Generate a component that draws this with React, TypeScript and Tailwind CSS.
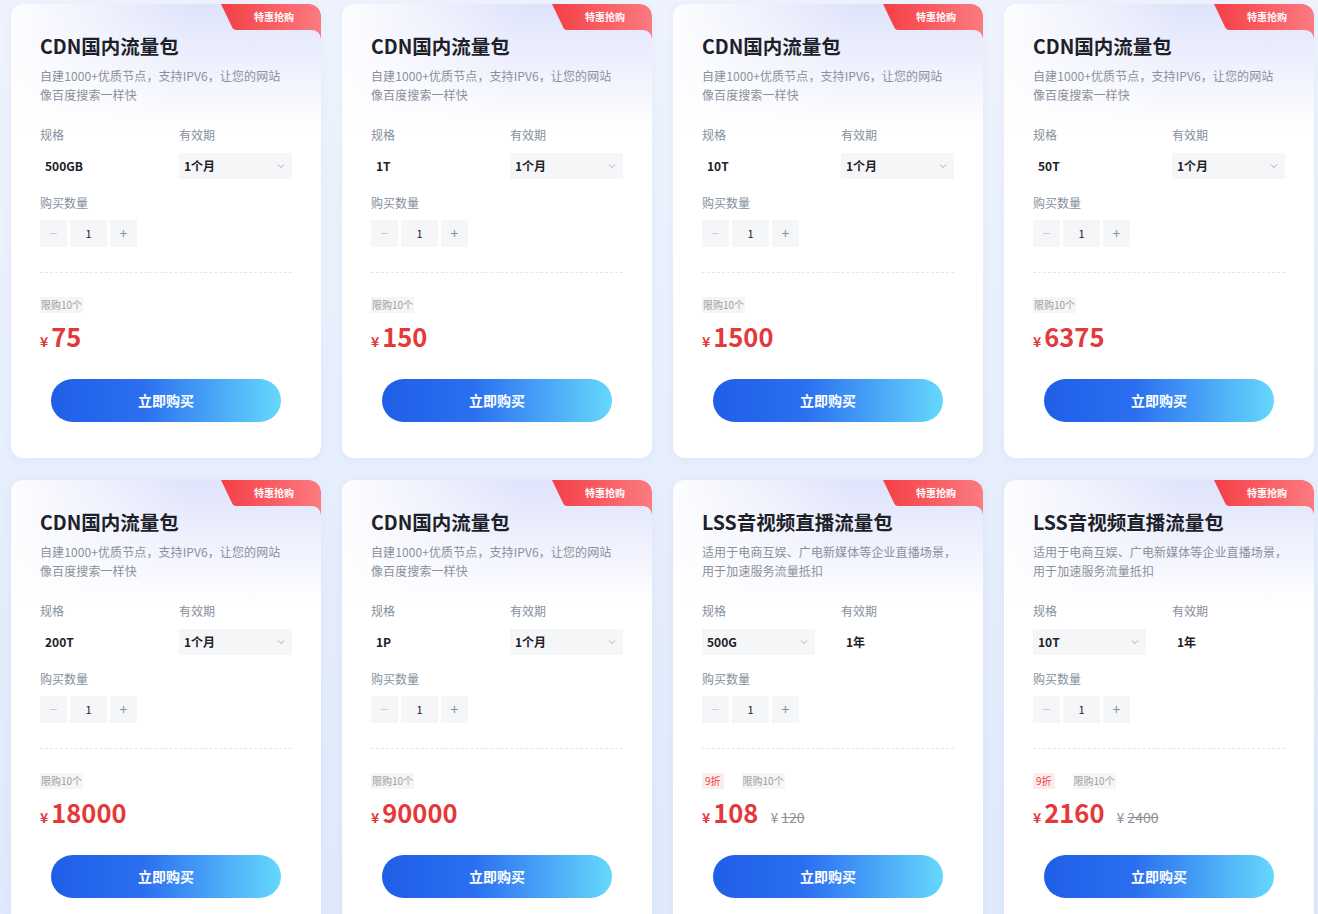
import React from 'react';

interface Pkg {
  title: string;
  desc: string[];
  spec: string;
  period: string;
  specSelect: boolean; // which field is a dropdown
  price: string;
  discount?: string;
  original?: string;
}

const CDN_DESC = ['自建1000+优质节点，支持IPV6，让您的网站', '像百度搜索一样快'];
const LSS_DESC = ['适用于电商互娱、广电新媒体等企业直播场景，', '用于加速服务流量抵扣'];

const PACKAGES: Pkg[] = [
  { title: 'CDN国内流量包', desc: CDN_DESC, spec: '500GB', period: '1个月', specSelect: false, price: '75' },
  { title: 'CDN国内流量包', desc: CDN_DESC, spec: '1T', period: '1个月', specSelect: false, price: '150' },
  { title: 'CDN国内流量包', desc: CDN_DESC, spec: '10T', period: '1个月', specSelect: false, price: '1500' },
  { title: 'CDN国内流量包', desc: CDN_DESC, spec: '50T', period: '1个月', specSelect: false, price: '6375' },
  { title: 'CDN国内流量包', desc: CDN_DESC, spec: '200T', period: '1个月', specSelect: false, price: '18000' },
  { title: 'CDN国内流量包', desc: CDN_DESC, spec: '1P', period: '1个月', specSelect: false, price: '90000' },
  { title: 'LSS音视频直播流量包', desc: LSS_DESC, spec: '500G', period: '1年', specSelect: true, price: '108', discount: '9折', original: '120' },
  { title: 'LSS音视频直播流量包', desc: LSS_DESC, spec: '10T', period: '1年', specSelect: true, price: '2160', discount: '9折', original: '2400' },
];

function Badge() {
  return (
    <div className="absolute top-0 right-0 w-[100px] h-[36px]">
      <svg width="100" height="36" viewBox="0 0 100 36" className="absolute inset-0">
        <defs>
          <linearGradient id="badgeGrad" x1="0" y1="0" x2="1" y2="0">
            <stop offset="0" stopColor="#f43f46" />
            <stop offset="1" stopColor="#fb7b80" />
          </linearGradient>
        </defs>
        <path d="M0 0 H88 A12 12 0 0 1 100 12 V35 Q99 26 90 26 H15 Q12.5 26 11.5 24 Z" fill="url(#badgeGrad)" />
      </svg>
      <span className="absolute left-[33px] top-[5px] text-[10px] leading-[16px] font-bold text-white">特惠抢购</span>
    </div>
  );
}

function Chevron() {
  return (
    <svg width="10" height="10" viewBox="0 0 10 10" fill="none">
      <path d="M2 3.5 L5 6.5 L8 3.5" stroke="#a9adb4" strokeWidth="1" />
    </svg>
  );
}

function Field({ value, select }: { value: string; select: boolean }) {
  if (select) {
    return (
      <div className="h-[26px] bg-[#f5f6f7] flex items-center justify-between pl-[5px] pr-[6px]">
        <span className="text-[12px] font-bold text-[#1d2129]">{value}</span>
        <Chevron />
      </div>
    );
  }
  return (
    <div className="h-[26px] flex items-center pl-[5px]">
      <span className="text-[12px] font-bold text-[#1d2129]">{value}</span>
    </div>
  );
}

function Card({ p }: { p: Pkg }) {
  return (
    <div className="relative h-[454px] rounded-[12px] overflow-hidden bg-white shadow-[0_2px_10px_rgba(40,80,180,0.05)]">
      <div className="absolute inset-x-0 top-0 h-[130px] bg-[linear-gradient(100deg,rgba(255,255,255,0.95)_0%,rgba(255,255,255,0)_55%),linear-gradient(180deg,#dfe3fb_0%,#ffffff_125px)]" />
      <Badge />
      <div className="relative px-[29px] pt-[28px] pb-[36px]">
        <div className="text-[19.5px] leading-[28px] font-bold text-[#1d2129]">{p.title}</div>
        <div className="mt-[6px] text-[12px] leading-[19px] text-[#8a919c] tracking-[0.1px]">
          {p.desc.map((l, i) => (
            <div key={i} className="whitespace-nowrap">{l}</div>
          ))}
        </div>

        <div className="mt-[22px] grid grid-cols-2 gap-x-[26px]">
          <div className="text-[12px] leading-[18px] text-[#86909c]">规格</div>
          <div className="text-[12px] leading-[18px] text-[#86909c]">有效期</div>
          <div className="mt-[9px]">
            <Field value={p.spec} select={p.specSelect} />
          </div>
          <div className="mt-[9px]">
            <Field value={p.period} select={!p.specSelect} />
          </div>
        </div>

        <div className="mt-[15px] text-[12px] leading-[18px] text-[#86909c]">购买数量</div>
        <div className="mt-[8px] flex items-center gap-[3px]">
          <div className="w-[27px] h-[27px] bg-[#f5f6f7] flex items-center justify-center text-[14px] text-[#c9cdd4]">−</div>
          <div className="w-[37px] h-[27px] bg-[#f5f6f7] flex items-center justify-center text-[11px] text-[#1d2129]">1</div>
          <div className="w-[27px] h-[27px] bg-[#f5f6f7] flex items-center justify-center text-[14px] text-[#86909c]">+</div>
        </div>

        <div className="mt-[25px] border-t border-dashed border-[#e5e6eb]" />

        <div className="mt-[24px] h-[16px] flex items-center gap-[18px]">
          {p.discount && (
            <span className="px-[3px] bg-[#fdeced] text-[10px] leading-[16px] text-[#ef4444]">{p.discount}</span>
          )}
          <span className="px-[1px] bg-[#f5f5f5] text-[10px] leading-[16px] text-[#999ea6]">限购10个</span>
        </div>

        <div className="mt-[7px] h-[32px] flex items-baseline">
          <span className="text-[14px] font-bold text-[#e5383b] mr-[3px]">¥</span>
          <span className="text-[25.5px] leading-[32px] font-bold text-[#e5383b]">{p.price}</span>
          {p.original && (
            <span className="ml-[12px] text-[14px] text-[#8a9099]">
              ¥ <span className="line-through">{p.original}</span>
            </span>
          )}
        </div>

        <div className="mt-[27px] flex justify-center">
          <button className="w-[230px] h-[43px] rounded-full bg-[linear-gradient(90deg,#1f5fe7_0%,#2b6ff0_40%,#65d8fc_100%)] text-white text-[14px] font-bold">
            立即购买
          </button>
        </div>
      </div>
    </div>
  );
}

export default function App() {
  return (
    <div
      className="min-h-screen bg-[linear-gradient(180deg,#eef3fd_0%,#dfe9fb_100%)] pl-[11px] pr-[4px] pt-[4px] pb-[20px]"
      style={{ fontFamily: '"Noto Sans CJK SC", "Noto Sans", sans-serif' }}
    >
      <div className="grid grid-cols-4 gap-x-[21px] gap-y-[22px]">
        {PACKAGES.map((p, i) => (
          <Card key={i} p={p} />
        ))}
      </div>
    </div>
  );
}
